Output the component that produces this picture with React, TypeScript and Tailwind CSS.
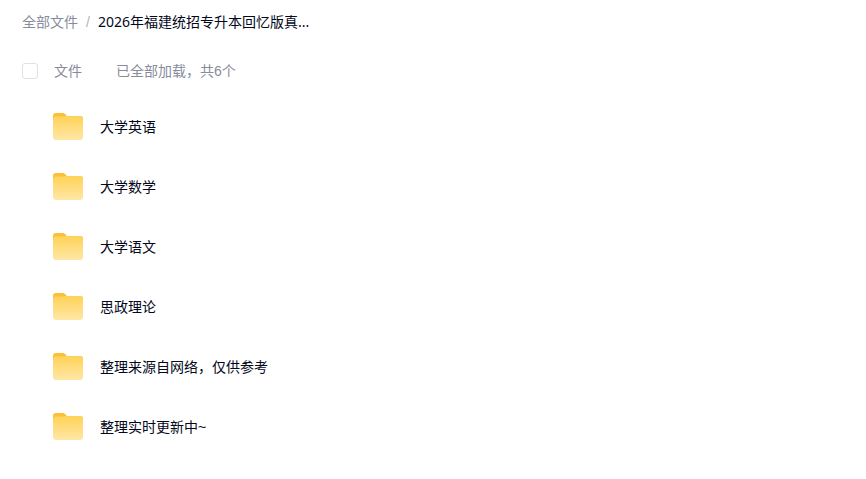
const files = [
  '大学英语',
  '大学数学',
  '大学语文',
  '思政理论',
  '整理来源自网络，仅供参考',
  '整理实时更新中~',
];

function FolderIcon() {
  return (
    <svg width="30" height="27" viewBox="0 0 30 27" className="shrink-0 mb-[2px]">
      <defs>
        <linearGradient id="folderBody" x1="0" y1="0" x2="0" y2="1">
          <stop offset="0" stopColor="#ffd257" />
          <stop offset="1" stopColor="#ffe7a6" />
        </linearGradient>
      </defs>
      <path d="M3 0h6.500c1.200 0 2 .5 2.800 1.300L14 3h13a3 3 0 0 1 3 3v3H0V3a3 3 0 0 1 3-3z" fill="#fdbf35" />
      <path d="M3 3.500h7.500c1 0 1.600-.3 2.300-.5H27a3 3 0 0 1 3 3v18a3 3 0 0 1-3 3H3a3 3 0 0 1-3-3V6.500a3 3 0 0 1 3-3z" fill="url(#folderBody)" />
    </svg>
  );
}

export default function App() {
  return (
    <div className="min-h-screen bg-white font-['Liberation_Sans','Noto_Sans_CJK_SC',sans-serif] text-sm">
      <div className="flex items-center h-[20px] mt-[12px] pl-[22px]">
        <span className="text-[#878c9c]">全部文件</span>
        <span className="text-[#afb3bf] mx-[8px]">/</span>
        <span className="font-['Noto_Sans','Noto_Sans_CJK_SC',sans-serif] leading-[20px] text-[#03081a]">2026年福建统招专升本回忆版真...</span>
      </div>

      <div className="flex items-center h-[20px] mt-[29px] pl-[22px]">
        <div className="w-[16px] h-[16px] rounded-[3px] border border-[#dfe1e6] bg-white" />
        <span className="ml-[16px] w-[62px] text-[#878c9c]">文件</span>
        <span className="text-[#878c9c]">已全部加载，共6个</span>
      </div>

      <div className="mt-[16px]">
        {files.map((name) => (
          <div key={name} className="flex items-center h-[60px] pl-[53px]">
            <FolderIcon />
            <span className="ml-[17px] text-[#03081a]">{name}</span>
          </div>
        ))}
      </div>
    </div>
  );
}
